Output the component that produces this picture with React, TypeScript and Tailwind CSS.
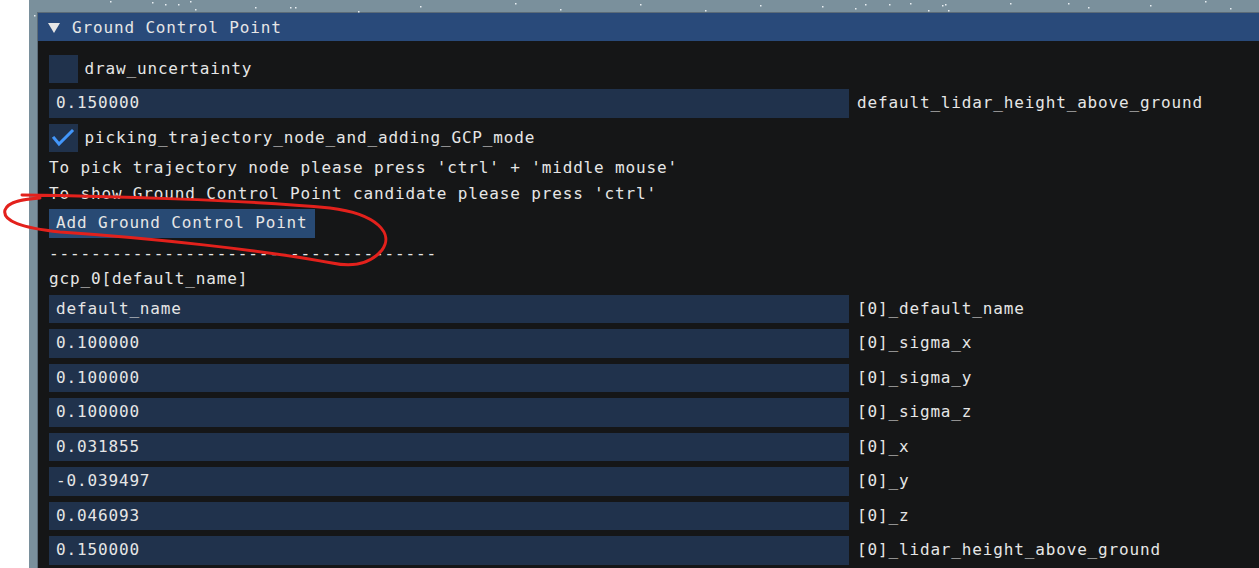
import React from 'react';

const mono = "font-['DejaVu_Sans_Mono','Liberation_Mono',monospace] text-[16px] tracking-[0.85px]";

const speckles: [number, number][] = [
    [110, 1], [152, 2], [165, 4], [178, 4], [190, 1], [195, 9], [255, 7], [290, 7], [295, 7], [358, 11],
    [34, 15], [420, 6], [515, 3], [560, 9], [640, 4], [705, 10], [760, 5], [822, 6], [855, 8], [865, 4],
    [889, 4], [910, 3], [942, 5], [945, 4], [928, 10], [948, 10], [1010, 3], [1068, 3], [1088, 7], [1150, 5],
    [1205, 1], [1230, 8],
];

const Checkbox = ({ checked, label }: { checked: boolean, label: string }) => (
    <div className="flex items-center gap-[7px]">
        <div className="w-[28.5px] h-[28.5px] bg-[#20324c] flex items-center justify-center">
            {checked && (
                <svg width="28" height="28" viewBox="0 0 28 28">
                    <polyline points="5,14 10,20 23,7" fill="none" stroke="#4296fa" strokeWidth="3" strokeLinecap="square" />
                </svg>
            )}
        </div>
        <span>{label}</span>
    </div>
);

const InputRow = ({ value, label }: { value: string, label: string }) => (
    <div className="flex items-center gap-[8px]">
        <div className="w-[800px] h-[28.5px] bg-[#20324c] flex items-center px-[7px]">{value}</div>
        <span>{label}</span>
    </div>
);

const TextLine = ({ children }: { children: React.ReactNode }) => (
    <div className="h-[19.5px] leading-[19.5px] whitespace-pre">{children}</div>
);

export default function App() {
    const gcpRows = [
        ["default_name", "[0]_default_name"],
        ["0.100000", "[0]_sigma_x"],
        ["0.100000", "[0]_sigma_y"],
        ["0.100000", "[0]_sigma_z"],
        ["0.031855", "[0]_x"],
        ["-0.039497", "[0]_y"],
        ["0.046093", "[0]_z"],
        ["0.150000", "[0]_lidar_height_above_ground"],
    ];

    return (
        <div className={`relative flex w-[1259px] h-[568px] overflow-hidden bg-white text-[#e6e6e6] ${mono}`}>
            <div className="w-[29px] shrink-0 bg-white" />
            <div className="flex-1 flex flex-col bg-[#7a909c] pl-[8px] pt-[12px]">
                <div className="flex-1 flex flex-col border-t border-l border-[#5b6b78]">
                    <div className="h-[28px] shrink-0 bg-[#294a7a] flex items-center pl-[10px] pt-[1px] gap-[12px]">
                        <svg width="12" height="10" viewBox="0 0 12 10">
                            <polygon points="0,0 12,0 6,10" fill="#e6e6e6" />
                        </svg>
                        <span>Ground Control Point</span>
                    </div>
                    <div className="flex-1 bg-[#151617] pl-[11px] pt-[13.5px] flex flex-col gap-[6px]">
                        <Checkbox checked={false} label="draw_uncertainty" />
                        <InputRow value="0.150000" label="default_lidar_height_above_ground" />
                        <Checkbox checked={true} label="picking_trajectory_node_and_adding_GCP_mode" />
                        <TextLine>To pick trajectory node please press 'ctrl' + 'middle mouse'</TextLine>
                        <TextLine>To show Ground Control Point candidate please press 'ctrl'</TextLine>
                        <div className="flex">
                            <button className="h-[28.5px] bg-[#284a74] px-[7px] flex items-center">Add Ground Control Point</button>
                        </div>
                        <TextLine>-------------------------------------</TextLine>
                        <TextLine>gcp_0[default_name]</TextLine>
                        {gcpRows.map(([v, l], i) => (
                            <InputRow key={i} value={v} label={l} />
                        ))}
                    </div>
                </div>
            </div>

            <svg className="absolute inset-0 pointer-events-none" width="1259" height="568" viewBox="0 0 1259 568">
                {speckles.map(([x, y], i) => (
                    <rect key={i} x={x} y={y} width="1.5" height="1.5" fill="#e8eef2" />
                ))}
                <path
                    d="M 22 195 C 100 196, 250 200, 330 208 C 378 214, 394 234, 382 250 C 372 262, 356 268, 332 263 C 262 250, 150 238, 60 232 C 22 228, 2 221, 5 210 C 8 201, 26 199, 40 198"
                    fill="none"
                    stroke="#e3211c"
                    strokeWidth="3"
                    strokeLinecap="round"
                />
            </svg>
        </div>
    );
}
